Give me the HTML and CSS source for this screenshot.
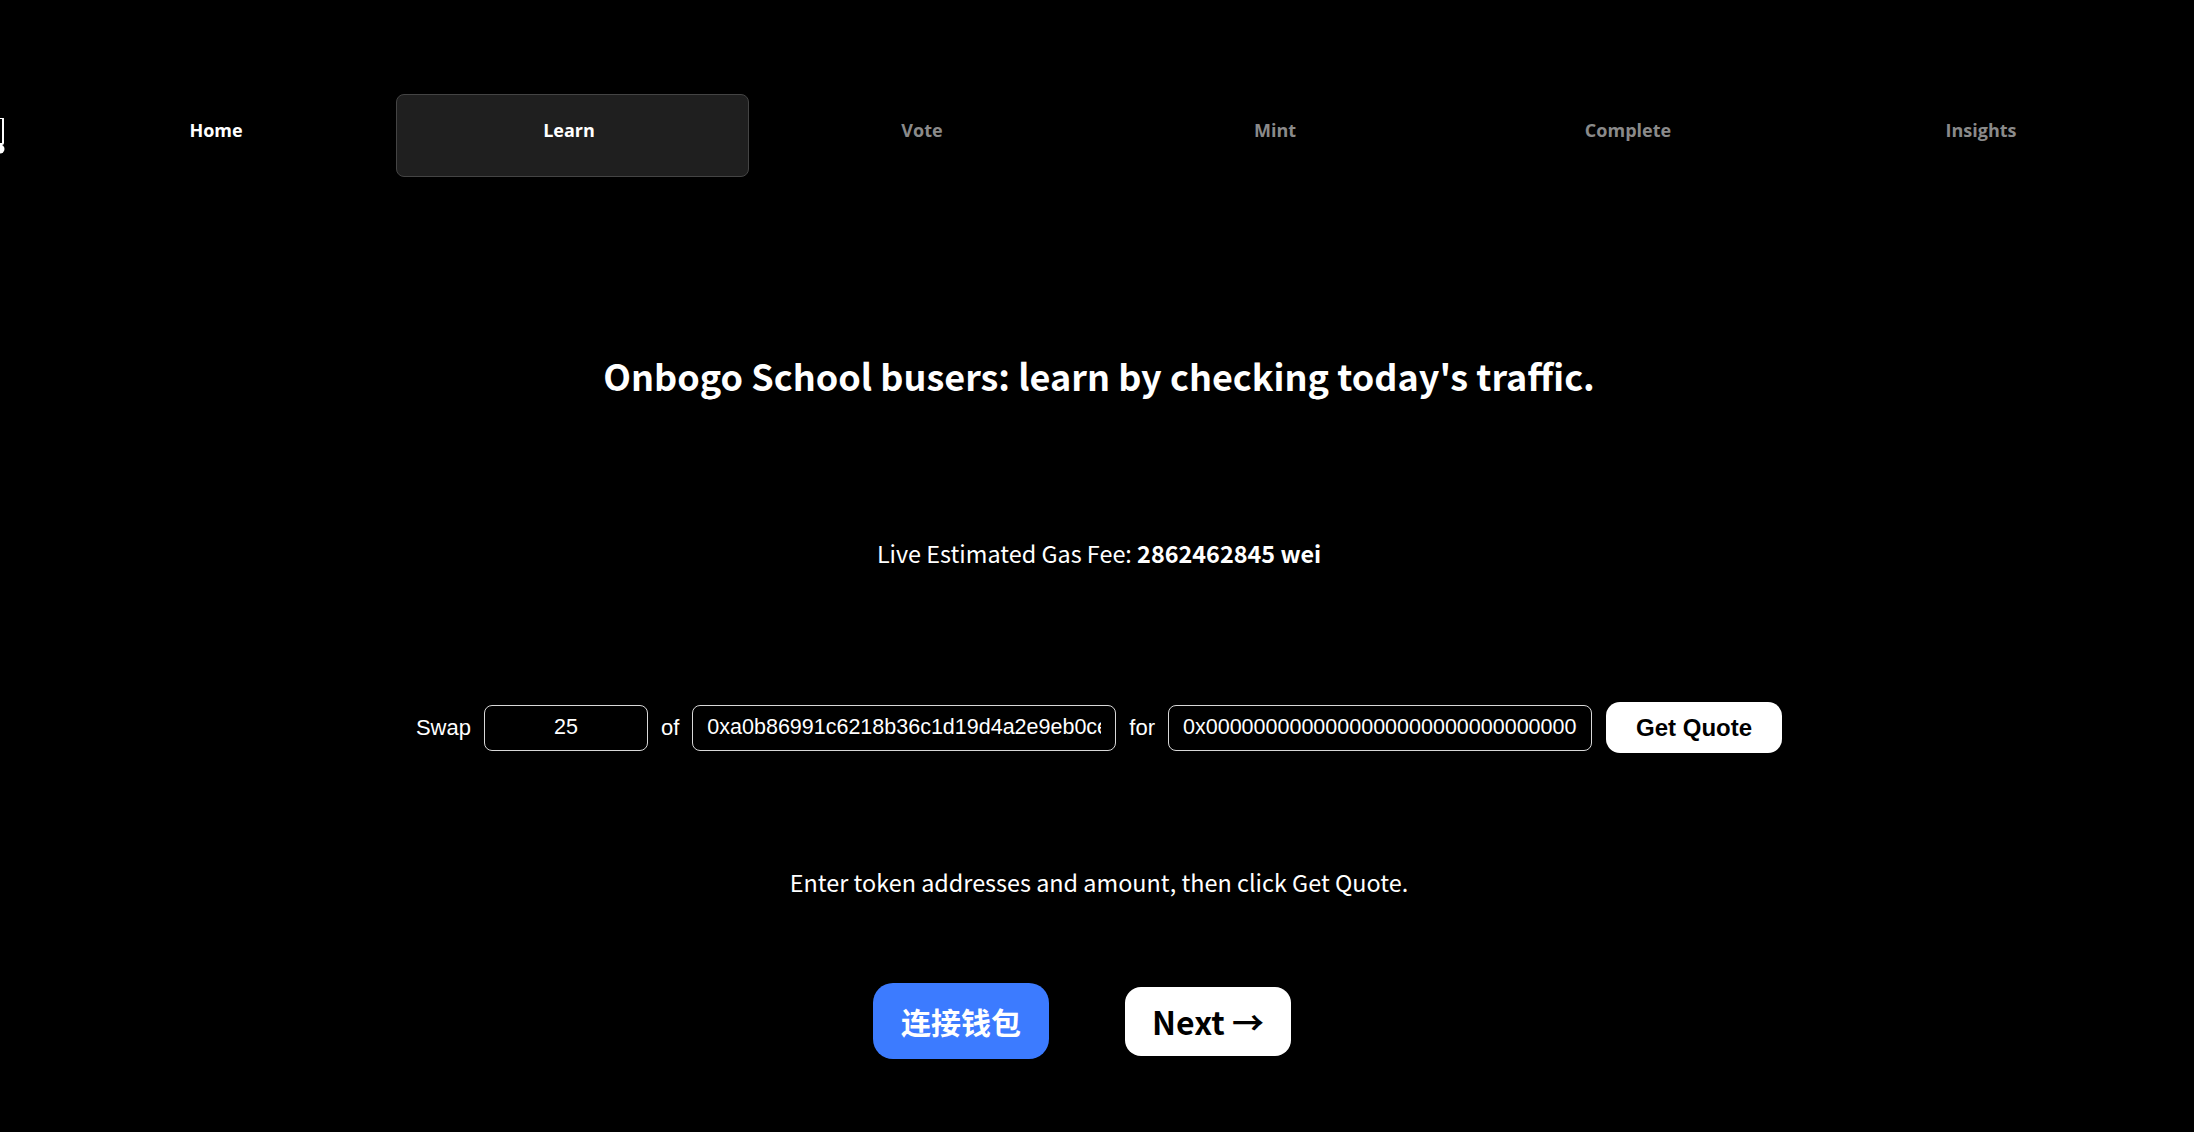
FILE: index.html
```html
<!DOCTYPE html>
<html lang="en">
<head>
<meta charset="utf-8">
<title>Onbogo School</title>
<link rel="stylesheet" href="styles.css">
</head>
<body>
<div class="page">
  <svg class="logo" width="12" height="40" viewBox="0 0 12 40"><rect x="-6" y="0" width="9" height="26" rx="1" fill="none" stroke="#fff" stroke-width="2"/><circle cx="0" cy="31" r="4.5" fill="#fff"/></svg>
  <nav class="nav">
    <a class="nav-item active-home">Home</a>
    <a class="nav-item current">Learn</a>
    <a class="nav-item">Vote</a>
    <a class="nav-item">Mint</a>
    <a class="nav-item">Complete</a>
    <a class="nav-item">Insights</a>
  </nav>
  <main class="main">
    <h1 class="title">Onbogo School busers: learn by checking today's traffic.</h1>
    <p class="gas">Live Estimated Gas Fee: <strong>2862462845 wei</strong></p>
    <div class="swap">
      <span class="label">Swap</span>
      <input class="field amount" type="text" value="25">
      <span class="label">of</span>
      <input class="field addr" type="text" value="0xa0b86991c6218b36c1d19d4a2e9eb0ce3606eb48">
      <span class="label">for</span>
      <input class="field addr" type="text" value="0x0000000000000000000000000000000000000000">
      <button class="quote">Get Quote</button>
    </div>
    <p class="hint">Enter token addresses and amount, then click Get Quote.</p>
    <div class="actions">
      <button class="connect">连接钱包</button>
      <button class="next">Next →</button>
    </div>
  </main>
</div>
</body>
</html>
```

FILE: styles.css
```css
html, body {
  margin: 0;
  padding: 0;
  background: #000;
  color: #fff;
}
.page {
  position: relative;
  min-height: 1132px;
  font-family: "Noto Sans CJK SC", "Noto Sans", sans-serif;
}
.logo {
  position: absolute;
  left: 0;
  top: 118px;
}
.nav {
  display: grid;
  grid-template-columns: repeat(6, 353px);
  padding: 94px 33px 0 43px;
}
.nav-item {
  height: 83px;
  box-sizing: border-box;
  padding: 23px 7px 0 0;
  text-align: center;
  font-family: "Open Sans", "Noto Sans", sans-serif;
  font-weight: 700;
  font-size: 18px;
  line-height: 24px;
  color: #8a8a8a;
  border: 1px solid transparent;
  border-radius: 8px;
}
.active-home { color: #fff; }
.current {
  color: #fff;
  background: #1f1f1f;
  border-color: #444;
}
.main {
  display: flex;
  flex-direction: column;
  align-items: center;
  padding-left: 4px;
}
.title {
  margin: 176px 0 0;
  font-size: 36px;
  line-height: 44px;
  font-weight: 700;
}
.gas {
  margin: 141px 0 0;
  font-size: 23.4px;
  line-height: 30px;
}
.gas strong { font-weight: 700; }
.swap {
  margin-top: 134px;
  display: flex;
  align-items: center;
  gap: 13px;
  font-family: "Liberation Sans", Arial, sans-serif;
}
.label {
  font-size: 22px;
  color: #fff;
}
.field {
  height: 46px;
  box-sizing: border-box;
  background: #000;
  color: #fff;
  border: 1px solid #d8d8d8;
  border-radius: 8px;
  font-family: "Liberation Sans", Arial, sans-serif;
  font-size: 21.5px;
  padding: 0 14px;
  outline: none;
}
.amount {
  width: 164px;
  text-align: center;
}
.addr { width: 424px; }
.quote {
  height: 51px;
  padding: 0 30px;
  margin-left: 1px;
  background: #fff;
  color: #000;
  border: none;
  border-radius: 14px;
  font-family: "Liberation Sans", Arial, sans-serif;
  font-weight: 700;
  font-size: 24px;
}
.hint {
  margin: 114px 0 0;
  font-size: 23.4px;
  line-height: 30px;
}
.actions {
  margin-top: 86px;
  display: flex;
  align-items: center;
  gap: 40px;
  margin-left: 2px;
}
.actions button {
  margin-right: 36px;
  border: none;
  font-family: "Noto Sans CJK SC", "Noto Sans", sans-serif;
  font-weight: 700;
}
.connect {
  width: 176px;
  height: 76px;
  border-radius: 20px;
  background: #3c7bff;
  color: #fff;
  font-size: 30px;
}
.next {
  width: 166px;
  height: 69px;
  border-radius: 16px;
  background: #fff;
  color: #000;
  font-size: 32px;
}
```
